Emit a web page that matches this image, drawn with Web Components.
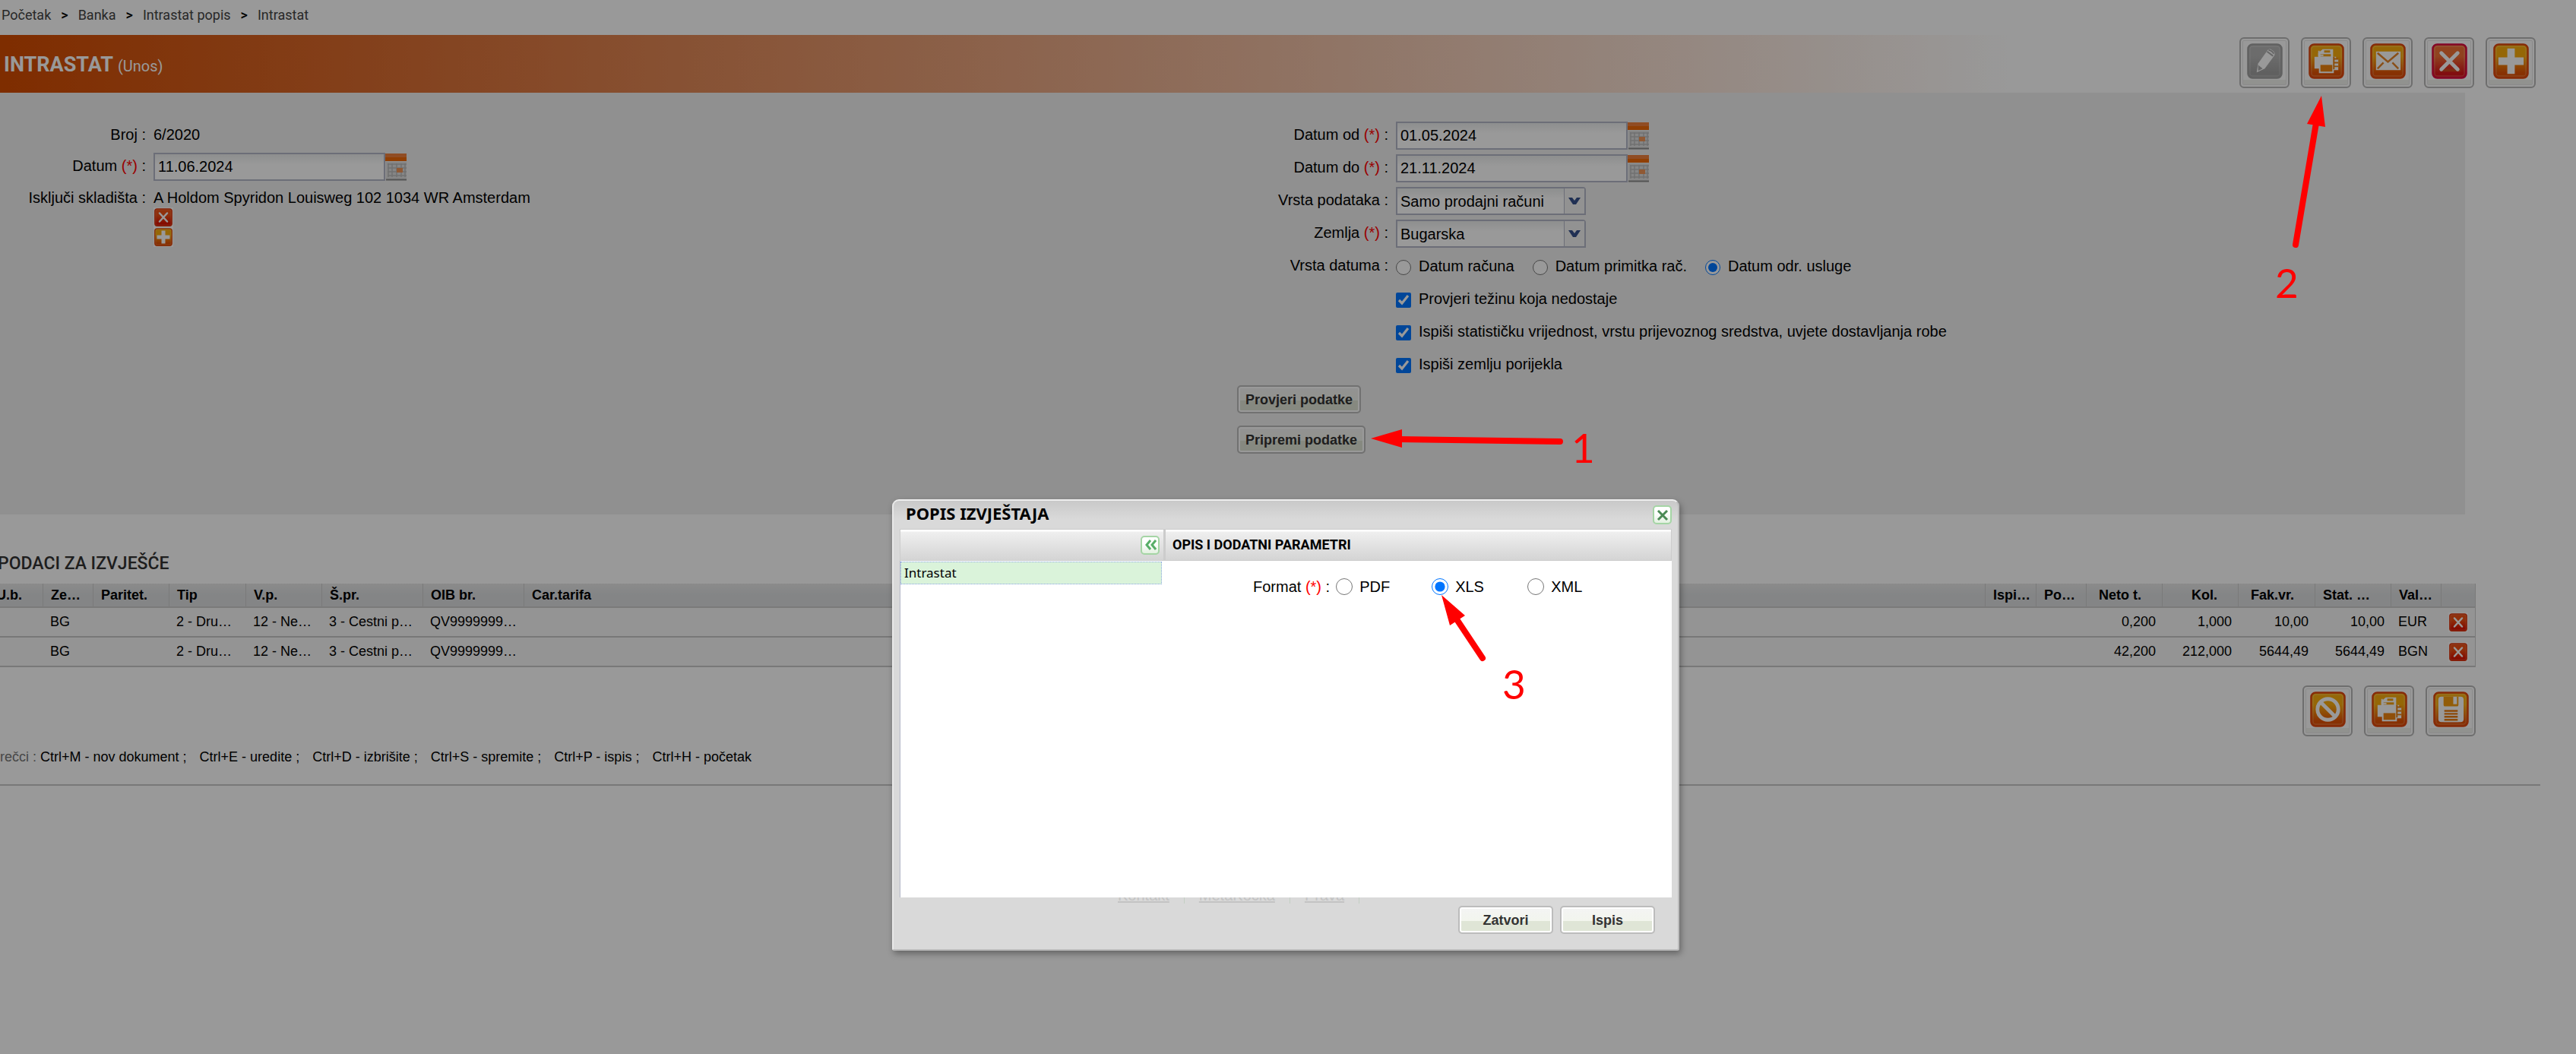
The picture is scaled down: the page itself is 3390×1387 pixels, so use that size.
<!DOCTYPE html>
<html lang="hr">
<head>
<meta charset="utf-8">
<title>Intrastat</title>
<style>
html,body{margin:0;background:#fff;min-height:100%}
body{font-family:"Liberation Sans",Arial,sans-serif;font-size:20px;color:#000;position:relative;min-height:100vh;overflow:hidden}
</style>
</head>
<body>
<intrastat-page></intrastat-page>
<modal-mask></modal-mask>
<report-dialog></report-dialog>
<step-notes></step-notes>
<script>
const tile = (top, bottom, edge, inner) => `
  <defs><linearGradient id="g" x1="0" y1="0" x2="0" y2="1"><stop offset="0" stop-color="${top}"/><stop offset=".35" stop-color="${top}"/><stop offset=".85" stop-color="${bottom}"/><stop offset="1" stop-color="${bottom}"/></linearGradient></defs>
  <rect x="1.5" y="1.5" width="45" height="45" rx="6" fill="url(#g)" stroke="${edge}" stroke-width="2.5"/>
  <rect x="4" y="4" width="40" height="40" rx="4" fill="none" stroke="#fff" stroke-opacity=".18" stroke-width="1.5"/>${inner}`;
const orange = inner => tile('#f9ac0c', '#e25206', '#e0480e', inner);
const ICONS = {
  edit: tile('#b4b4b4', '#a0a0a0', '#a2a2a2', '<path d="M13 39l2-12L28 9q2-2 4-1l4 3q2 2 1 5L24 34z" fill="#fff"/><path d="M27 11l8 6M29 9q5 1 7 5" fill="none" stroke="#aaa" stroke-width="2"/><path d="M15 29l6 5-6 3z" fill="#aaa"/>'),
  print: orange('<path d="M13 18v-5l6-5h14v10h4v3h3v15h-6v4H14v-6H8V18z" fill="#fff"/><path d="M16 16h14M21 11h8" stroke="#f4a010" stroke-width="3"/><path d="M14 10v6h6" fill="none" stroke="#fff" stroke-width="2"/><rect x="16" y="29" width="16" height="9" fill="#ee8410"/><path d="M34 18v17M34 21h6M34 26h6M34 31h6" stroke="#e88010" stroke-width="2"/>'),
  mail: orange('<rect x="8" y="11" width="33" height="25" fill="#fff"/><path d="M10 13l14 12 14-12M10 34l8-8M38 34l-8-8" fill="none" stroke="#e48428" stroke-width="2.5"/>'),
  remove: tile('#f07034', '#d8181c', '#dc0c40', '<path d="M12 36h27" stroke="#d04a20" stroke-width="4"/><path d="M13 13l22 22M35 13L13 35" stroke="#fff" stroke-width="5" stroke-linecap="round"/>'),
  add: orange('<path d="M19 7h10v12h12v10H29v12H19V29H7V19h12z" fill="#fff"/>'),
  cancel: orange('<circle cx="24" cy="24" r="14" fill="none" stroke="#fff" stroke-width="5"/><path d="M14 14l20 20" stroke="#fff" stroke-width="5"/>'),
  save: orange('<path d="M7 11q0-4 4-4h26q4 0 4 4v26q0 4-4 4H11q-4 0-4-4z" fill="#fff"/><path d="M14 7h20v11q0 2-2 2H16q-2 0-2-2z" fill="#f39c10"/><path d="M27 7h5v10h-5z" fill="#fff"/><path d="M14 41V25h20v16" fill="#fff"/><path d="M15 26h18M15 30h18M15 34h18M15 38h18" stroke="#ea7c10" stroke-width="2.5"/>'),
  del: tile('#ee5014', '#dc1400', '#dc3810', '<path d="M14 13l20 22M34 13L14 35" stroke="#fff" stroke-width="5" stroke-linecap="round"/>'),
};
const LABELS = {edit:'Uredi', print:'Ispis', mail:'E-mail', remove:'Izbriši', add:'Dodaj', cancel:'Odustani', save:'Spremi', del:'Izbriši'};
const define = (name, render) => customElements.define(name, class extends HTMLElement {
  connectedCallback() {
    if (this.shadowRoot) return;
    this.attachShadow({mode: 'open'}).innerHTML = render(this);
  }
});
const chevron = '<svg width="16" height="10" viewBox="0 0 16 10"><path d="M0 0h5l3 4 3-4h5L10 9H6z" fill="#36508c"/></svg>';

define('tool-button', el => `<style>
  :host{display:block}
  button{display:grid;place-items:center;box-sizing:border-box;width:66px;height:67px;padding:0 0 4px;border:2px solid #b8b8b8;border-radius:6px;background:linear-gradient(#fff 0 86%,#f2f3ee 86%);box-shadow:inset 0 0 0 2px #fff,inset 0 0 0 3px #e8e8e8}
  svg{display:block;width:47px;height:47px}
  </style><button type="button" aria-label="${LABELS[el.getAttribute('icon')]}"><svg viewBox="0 0 48 48">${ICONS[el.getAttribute('icon')]}</svg></button>`);

define('mini-button', el => `<style>
  :host{display:block;width:26px;height:26px}
  button{display:block;width:26px;height:26px;padding:1px;border:0;background:#fff}
  svg{display:block;width:24px;height:24px}
  </style><button type="button" aria-label="${LABELS[el.getAttribute('icon')]}"><svg viewBox="0 0 48 48">${ICONS[el.getAttribute('icon')]}</svg></button>`);

define('push-button', () => `<style>
  :host{display:block}
  button{width:100%;height:37px;padding:0 9px;border:2px solid #bcbcbc;border-radius:5px;background:linear-gradient(#f4f4f4,#f2f5ed 55%,#dfe5d6 55%);box-shadow:inset 0 0 0 2px #fff;font:bold 18px/30px "Liberation Sans",Arial,sans-serif;color:#333;white-space:nowrap}
  </style><button type="button"><slot></slot></button>`);

define('crumb-trail', () => `<style>
  :host{display:block;font:18px/40px Roboto,sans-serif;color:#444;height:46px}
  nav{display:flex;gap:13px;padding-left:2px}
  a{color:inherit;text-decoration:none}
  span{color:#000;font-weight:500}
  </style><nav><a href="#">Početak</a><span>&gt;</span><a href="#">Banka</a><span>&gt;</span><a href="#">Intrastat popis</a><span>&gt;</span><a href="#">Intrastat</a></nav>`);

define('page-banner', () => `<style>
  :host{display:flex;justify-content:space-between;align-items:flex-start;height:76px;background:linear-gradient(90deg,#d34b00,#fff 78%)}
  h1{margin:0;padding-left:5px;font:bold 27px/78px Roboto,sans-serif;color:#fff}
  small{font-size:20px;font-weight:400}
  div{display:flex;gap:15px;padding:3px 53px 0 0}
  </style><h1>INTRASTAT <small>(Unos)</small></h1><div><slot></slot></div>`);

/* One form line: its label and its control share a shadow root, so that they can be tied. */
define('field-row', el => {
  const kind = el.getAttribute('kind'), label = el.getAttribute('label') || '', value = el.getAttribute('value') || '';
  const req = el.hasAttribute('required') ? ' <i>(*)</i>' : '';
  let control = '';
  if (kind === 'date') control = `<input id="c" class="date" type="text" value="${value}"><button class="cal" type="button" aria-label="Kalendar"><svg width="28" height="36" viewBox="0 0 28 36"><path d="M0 0h28v10H0z" fill="#f06a08"/><path d="M0 0h28v5H0z" fill="#f0803c"/><path d="M1 11h27v24H1z" fill="#e0e0e0"/><path d="M3 14h25M3 19h25M3 24h25M3 29h25M4 13v18M9 13v18M15 13v18M21 13v18M26 13v18" stroke="#bcbcbc" stroke-width="1.5"/><path d="M15 19h8v6h-8z" fill="#f09458"/><path d="M1 34.500h27" stroke="#8a8a8a" stroke-width="2"/></svg></button>`;
  else if (kind === 'select') control = `<span class="combo"><select id="c"><option>${value}</option></select><b>${chevron}</b></span>`;
  else if (kind === 'radio') control = value.split('|').map((t, i) => `<span class="opt"><input type="radio" name="r" id="r${i}"${i == el.getAttribute('checked') ? ' checked' : ''}><label for="r${i}">${t}</label></span>`).join('');
  else if (kind === 'check') control = `<span class="opt"><input type="checkbox" id="c" checked><label for="c">${value}</label></span>`;
  else control = `<span class="text">${value}</span>`;
  const name = !label ? '<span class="name"></span>' : kind === 'radio' || !kind ? `<span class="name">${label}${req} :</span>` : `<label class="name" for="c">${label}${req} :</label>`;
  return `<style>
  :host{display:grid;grid-template-columns:var(--label-width) 1fr;column-gap:10px;font-size:20px}
  .name{text-align:right;line-height:35px;white-space:nowrap}
  i{font-style:normal;color:red}
  .ctl{display:flex;align-items:center;height:37px}
  .text{line-height:35px;align-self:start;white-space:nowrap}
  .date{box-sizing:border-box;width:305px;height:37px}
  .date,select{margin:0;padding:0 4px;border:2px solid #b5b8c8;border-radius:0;background:linear-gradient(#eceeee,#fff 40%);font:inherit;color:#000}
  .cal{padding:0;border:0;background:none;height:37px}
  .cal svg{display:block}
  .combo{display:grid;width:250px}
  .combo>*{grid-area:1/1}
  select{appearance:none;width:100%;height:37px;box-sizing:border-box;border-radius:0 4px 0 0}
  .combo b{justify-self:end;width:26px;height:33px;margin:2px;display:grid;place-items:center;background:#f4f4f4;border-left:1px solid #b5b8c8;pointer-events:none}
  .opt{display:flex;align-items:center;gap:10px;margin-right:24px}
  .opt label{line-height:37px;height:37px;white-space:nowrap}
  .opt input{width:20px;height:20px;margin:2px 0 0}
  </style>${name}<div class="ctl">${control}</div>`;
});

define('exclude-row', () => `<style>
  :host{display:grid;grid-template-columns:var(--label-width) 1fr;column-gap:10px;font-size:20px;line-height:26px;padding-top:5px}
  span{text-align:right}
  </style><span>Isključi skladišta :</span><div>A Holdom Spyridon Louisweg 102 1034 WR Amsterdam<mini-button icon="del"></mini-button><mini-button icon="add"></mini-button></div>`);

define('entry-form', () => `<style>
  :host{display:grid;grid-template-columns:1fr 1fr;box-sizing:border-box;min-height:555px;margin-right:146px;padding-top:38px;background:#f0f0f0}
  .left,.right{display:flex;flex-direction:column}
  .left{--label-width:192px;gap:4px}
  .right{--label-width:205px;gap:6px}
  .actions{display:flex;flex-direction:column;align-items:flex-start;gap:16px;padding:3px 6px}
  </style>
  <div class="left"><field-row label="Broj" value="6/2020"></field-row><field-row kind="date" label="Datum" required value="11.06.2024"></field-row><exclude-row></exclude-row></div>
  <div class="right">
  <field-row kind="date" label="Datum od" required value="01.05.2024"></field-row>
  <field-row kind="date" label="Datum do" required value="21.11.2024"></field-row>
  <field-row kind="select" label="Vrsta podataka" value="Samo prodajni računi"></field-row>
  <field-row kind="select" label="Zemlja" required value="Bugarska"></field-row>
  <field-row kind="radio" label="Vrsta datuma" checked="2" value="Datum računa|Datum primitka rač.|Datum odr. usluge"></field-row>
  <field-row kind="check" value="Provjeri težinu koja nedostaje"></field-row>
  <field-row kind="check" value="Ispiši statističku vrijednost, vrstu prijevoznog sredstva, uvjete dostavljanja robe"></field-row>
  <field-row kind="check" value="Ispiši zemlju porijekla"></field-row>
  <div class="actions"><push-button>Provjeri podatke</push-button><push-button>Pripremi podatke</push-button></div>
  </div>`);

define('report-table', () => {
  const widths = [72,66,100,101,100,133,133,0,67,66,100,100,101,100,66,45];
  const heads = ['U.b.','Ze…','Paritet.','Tip','V.p.','Š.pr.','OIB br.','Car.tarifa','Ispi…','Po…','Neto t.','Kol.','Fak.vr.','Stat. …','Val…',''];
  const common = ['','BG','','2 - Dru…','12 - Ne…','3 - Cestni p…','QV9999999…','','',''];
  const rows = [['0,200','1,000','10,00','10,00','EUR'],['42,200','212,000','5644,49','5644,49','BGN']];
  const num = i => i > 9 && i < 14 ? ' class="n"' : '';
  return `<style>
  :host{display:block;margin:0 132px 0 -15px}
  h2{margin:0;padding-left:12px;font:500 23px/32px Roboto,sans-serif;color:#333}
  table{width:100%;margin-top:10px;border-collapse:separate;border-spacing:0;table-layout:fixed;font-size:18px}
  th,td{box-sizing:border-box;padding:0 0 0 10px;text-align:left;white-space:nowrap;overflow:hidden}
  th{height:32px;background:linear-gradient(#e8e8e8,#dcdee0 50%,#dcdee0);border-right:1px solid #ccc;border-bottom:2px solid #ccc}
  td{height:39px;padding-left:9px;background:#f7f7f7;border-bottom:2px solid #c8c8c8}
  th.n{text-align:right;padding:0 27px 0 0}
  td.n{text-align:right;padding:0 9px 0 0}
  td:last-child{border-right:1px solid #ccc}
  </style><h2>PODACI ZA IZVJEŠĆE</h2>
  <table><colgroup>${widths.map(w => `<col${w ? ` style="width:${w}px"` : ''}>`).join('')}</colgroup>
  <thead><tr>${heads.map((h, i) => `<th${i < 13 ? num(i) : ''}>${h}</th>`).join('')}</tr></thead>
  <tbody>${rows.map(r => `<tr>${[...common, ...r].map((c, i) => `<td${num(i)}>${c}</td>`).join('')}<td><mini-button icon="del"></mini-button></td></tr>`).join('')}</tbody></table>`;
});

define('shortcut-bar', () => `<style>
  :host{display:block;margin:14px 47px 0 -12px;padding-bottom:23px;border-bottom:2px solid #c8c8c8;font-size:18px;line-height:26px;white-space:nowrap}
  p{margin:0;display:flex;gap:17px}
  em{font-style:normal;color:#777;margin-right:-12px}
  </style><p><em>Prečci :</em><span>Ctrl+M - nov dokument ;</span><span>Ctrl+E - uredite ;</span><span>Ctrl+D - izbrišite ;</span><span>Ctrl+S - spremite ;</span><span>Ctrl+P - ispis ;</span><span>Ctrl+H - početak</span></p>`);

define('intrastat-page', () => `<style>
  :host{display:block}
  report-table{padding-top:49px}
  .foot{display:flex;justify-content:flex-end;gap:15px;padding:24px 132px 0 0}
  </style><crumb-trail></crumb-trail>
  <page-banner><tool-button icon="edit"></tool-button><tool-button icon="print"></tool-button><tool-button icon="mail"></tool-button><tool-button icon="remove"></tool-button><tool-button icon="add"></tool-button></page-banner>
  <entry-form></entry-form><report-table></report-table>
  <div class="foot"><tool-button icon="cancel"></tool-button><tool-button icon="print"></tool-button><tool-button icon="save"></tool-button></div>
  <shortcut-bar></shortcut-bar>`);

define('modal-mask', () => '<style>:host{position:absolute;inset:0;background:rgba(0,0,0,.4)}</style>');

define('report-dialog', () => `<style>
  :host{position:absolute;left:calc(50% - 521px);top:657px;width:1036px;box-sizing:border-box;padding:0 8px;border:2px solid #bdbdbd;border-top-color:#eee;border-left-color:#e8e8e8;border-radius:9px 9px 3px 3px;background:linear-gradient(#c9c9c9,#d9d9d9 24px);box-shadow:2px 4px 8px rgba(0,0,0,.35)}
  header{display:flex;justify-content:space-between;align-items:center;height:37px}
  h2{margin:0;padding-left:8px;align-self:flex-start;font:bold 22px/32px "Noto Sans",sans-serif}
  .ico{display:grid;place-items:center;width:25px;height:25px;padding:0;border:2px solid #a5d5a5;border-radius:5px;background:linear-gradient(#fff,#fff 40%,#e2f0e0)}
  .cols{display:grid;grid-template-columns:349px 1fr}
  .bar{display:flex;align-items:center;height:42px;box-sizing:border-box;border:1px solid #ccc;background:linear-gradient(#fff 2px,#efefef 3px,#d4d4d4)}
  .bar.l{justify-content:flex-end;padding-right:5px;border-right-width:2px}
  h3{margin:0;padding-left:9px;font:bold 18px/40px Roboto,sans-serif}
  .body{background:#fff;height:443px}
  .body.l{border-left:1px solid #b5b8c8}
  ul{margin:0;padding:1px 4px 0 0;list-style:none}
  li{font:17px/28px "Noto Sans",sans-serif;padding-left:4px;background:#daf3da;border:1px dotted #8fa8e8}
  .fmt{display:flex;align-items:center;padding:19px 0 0 116px;height:30px;font-size:20px}
  .fmt i{font-style:normal;color:red}
  .fmt input{width:22px;height:22px;margin:0 9px 0 0}
  .fmt .cap{margin-right:8px}
  .fmt .o{display:flex;align-items:center;width:126px}
  .links{display:flex;align-items:flex-end;gap:19px;height:8px;overflow:hidden;padding-left:287px;font-size:20px;line-height:22px;color:#c3c3c3}
  .links a{color:inherit}
  .links b{width:1px;height:22px;background:#c3cfc3}
  footer{display:flex;justify-content:flex-end;gap:9px;padding:3px 22px 20px}
  push-button{width:125px}
  </style>
  <header><h2>POPIS IZVJEŠTAJA</h2><button class="ico" type="button" aria-label="Zatvori"><svg width="16" height="16" viewBox="0 0 16 16"><path d="M2 2l12 12M14 2L2 14" stroke="#4b8a55" stroke-width="3"/></svg></button></header>
  <div class="cols"><div><div class="bar l"><button class="ico" type="button" aria-label="Sažmi"><svg width="16" height="14" viewBox="0 0 16 14"><path d="M8 1L3 7l5 6M15 1l-5 6 5 6" fill="none" stroke="#58ae68" stroke-width="3"/></svg></button></div><div class="body l"><ul><li>Intrastat</li></ul></div></div>
  <div><div class="bar"><h3>OPIS I DODATNI PARAMETRI</h3></div><div class="body"><div class="fmt"><span class="cap">Format <i>(*)</i> :</span><span class="o"><input type="radio" name="f" id="pdf"><label for="pdf">PDF</label></span><span class="o"><input type="radio" name="f" id="xls" checked><label for="xls">XLS</label></span><span class="o"><input type="radio" name="f" id="xml"><label for="xml">XML</label></span></div></div></div></div>
  <div class="links"><a href="#">Kontakt</a><b></b><a href="#">MetaKocka</a><b></b><a href="#">Prava</a><b></b></div>
  <footer><push-button>Zatvori</push-button><push-button>Ispis</push-button></footer>`);

define('step-notes', () => `<style>
  :host{position:absolute;inset:0;overflow:hidden;pointer-events:none}
  svg{display:block;font:53px Lato,sans-serif;fill:red;stroke:none}
  path{stroke:red;stroke-width:8;stroke-linecap:round}
  </style><svg width="3390" height="1387">
  <path d="M2053 581L1840 578M3021 322L3048 162M1951 866L1917 815"/>
  <path d="M1804 577l41-12v24zM3055 126l5 41-24-4zM1897 783l31 27-20 13z" style="stroke:none"/>
  <text x="2068" y="609">1</text><text x="2994" y="392">2</text><text x="1977" y="920">3</text></svg>`);
</script>
</body>
</html>
